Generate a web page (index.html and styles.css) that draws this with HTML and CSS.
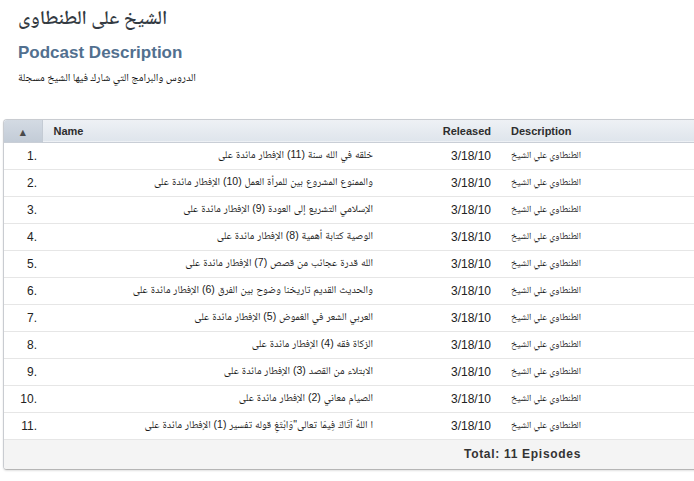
FILE: index.html
```html
<!DOCTYPE html>
<html>
<head>
<meta charset="utf-8">
<link rel="stylesheet" href="styles.css">
</head>
<body>
<div class="page">
  <h1 class="title" dir="rtl">الشيخ على الطنطاوى</h1>
  <h2 class="section">Podcast Description</h2>
  <p class="desc" dir="rtl">الدروس والبرامج التي شارك فيها الشيخ مسجلة</p>
</div>
<div class="tracklist">
  <table class="tracks">
    <colgroup>
      <col class="c-sort"><col class="c-name"><col class="c-rel"><col class="c-desc">
    </colgroup>
    <thead>
      <tr>
        <th class="sort"><span class="arrow">▲</span></th>
        <th class="name">Name</th>
        <th class="rel">Released</th>
        <th class="dsc">Description</th>
      </tr>
    </thead>
    <tbody>
      <tr><td class="num">1.</td><td class="name" dir="rtl">خلقه في الله سنة (11) الإفطار مائدة على</td><td class="rel">3/18/10</td><td class="dsc"><span dir="rtl">الطنطاوي علي الشيخ</span></td></tr>
      <tr><td class="num">2.</td><td class="name" dir="rtl">والممنوع المشروع بين للمرأة العمل (10) الإفطار مائدة على</td><td class="rel">3/18/10</td><td class="dsc"><span dir="rtl">الطنطاوي علي الشيخ</span></td></tr>
      <tr><td class="num">3.</td><td class="name" dir="rtl">الإسلامي التشريع إلى العودة (9) الإفطار مائدة على</td><td class="rel">3/18/10</td><td class="dsc"><span dir="rtl">الطنطاوي علي الشيخ</span></td></tr>
      <tr><td class="num">4.</td><td class="name" dir="rtl">الوصية كتابة أهمية (8) الإفطار مائدة على</td><td class="rel">3/18/10</td><td class="dsc"><span dir="rtl">الطنطاوي علي الشيخ</span></td></tr>
      <tr><td class="num">5.</td><td class="name" dir="rtl">الله قدرة عجائب من قصص (7) الإفطار مائدة على</td><td class="rel">3/18/10</td><td class="dsc"><span dir="rtl">الطنطاوي علي الشيخ</span></td></tr>
      <tr><td class="num">6.</td><td class="name" dir="rtl">والحديث القديم تاريخنا وضوح بين الفرق (6) الإفطار مائدة على</td><td class="rel">3/18/10</td><td class="dsc"><span dir="rtl">الطنطاوي علي الشيخ</span></td></tr>
      <tr><td class="num">7.</td><td class="name" dir="rtl">العربي الشعر في الغموض (5) الإفطار مائدة على</td><td class="rel">3/18/10</td><td class="dsc"><span dir="rtl">الطنطاوي علي الشيخ</span></td></tr>
      <tr><td class="num">8.</td><td class="name" dir="rtl">الزكاة فقه (4) الإفطار مائدة على</td><td class="rel">3/18/10</td><td class="dsc"><span dir="rtl">الطنطاوي علي الشيخ</span></td></tr>
      <tr><td class="num">9.</td><td class="name" dir="rtl">الابتلاء من القصد (3) الإفطار مائدة على</td><td class="rel">3/18/10</td><td class="dsc"><span dir="rtl">الطنطاوي علي الشيخ</span></td></tr>
      <tr><td class="num">10.</td><td class="name" dir="rtl">الصيام معاني (2) الإفطار مائدة على</td><td class="rel">3/18/10</td><td class="dsc"><span dir="rtl">الطنطاوي علي الشيخ</span></td></tr>
      <tr><td class="num">11.</td><td class="name" dir="rtl">ا اللهُ آتَاكَ فِيمَا تعالى"وَابْتَغِ قوله تفسير (1) الإفطار مائدة على</td><td class="rel">3/18/10</td><td class="dsc"><span dir="rtl">الطنطاوي علي الشيخ</span></td></tr>
    </tbody>
  </table>
  <div class="total">Total: 11 Episodes</div>
</div>
</body>
</html>
```

FILE: styles.css
```css
html, body {
  margin: 0;
  padding: 0;
  background: #ffffff;
  overflow: hidden;
}
body {
  font-family: "Liberation Sans", Arial, sans-serif;
  color: #222;
  width: 694px;
  height: 481px;
}
.page {
  padding: 6px 0 0 18px;
}
.title {
  margin: 0;
  font-family: "Noto Naskh Arabic", "DejaVu Sans", "Liberation Serif", serif;
  font-weight: 600;
  font-size: 19.5px;
  line-height: 28px;
  color: #333a42;
  width: max-content;
}
.section {
  margin: 8px 0 0 0;
  font-size: 17px;
  line-height: 22px;
  font-weight: bold;
  color: #52708f;
}
.desc {
  margin: 7px 0 0 0;
  font-family: "Noto Naskh Arabic", "DejaVu Sans", sans-serif;
  font-size: 10.8px;
  line-height: 16px;
  color: #111;
  width: max-content;
}
.tracklist {
  margin: 32px 0 0 3px;
  width: 760px;
  border: 1px solid #c9ccd1;
  border-right: none;
  border-bottom: 1px solid #b5b5b5;
  border-radius: 4px 0 0 4px;
  box-shadow: 0 1px 2px rgba(0,0,0,0.12);
  overflow: hidden;
}
.tracks {
  width: 100%;
  border-collapse: collapse;
  table-layout: fixed;
}
.c-sort { width: 38px; }
.c-name { width: 393px; }
.c-rel { width: 66px; }
.c-desc { width: auto; }
.tracks thead tr {
  height: 22px;
  background: linear-gradient(#eef1f5, #dfe5ec);
  border-bottom: 1px solid #c9ced6;
}
.tracks th {
  font-size: 11px;
  font-weight: bold;
  color: #2d2d2d;
  padding: 0;
  text-align: left;
}
.tracks th.sort {
  background: linear-gradient(#d3dae3, #c3ccd7);
  text-align: center;
  border-right: 1px solid #c4cbd4;
}
.arrow {
  font-family: "DejaVu Sans", sans-serif;
  font-size: 8px;
  color: #4a4a4a;
}
.tracks th.name { padding-left: 11px; }
.tracks th.rel { text-align: right; padding-right: 10px; }
.tracks th.dsc { padding-left: 10px; }
.tracks tbody tr {
  height: 27px;
  border-bottom: 1px solid #e6e6e6;
}
.tracks td {
  padding: 0;
  font-size: 12px;
  color: #222;
  white-space: nowrap;
  overflow: hidden;
}
.tracks td.num {
  text-align: right;
  padding-right: 5px;
}
.tracks td.name {
  font-family: "Liberation Sans", "Noto Naskh Arabic", "DejaVu Sans", sans-serif;
  font-size: 10.5px;
  color: #1a1a1a;
  text-align: right;
  padding-right: 62px;
}
.tracks td.rel {
  text-align: right;
  padding-right: 10px;
}
.tracks td.dsc {
  font-family: "Noto Naskh Arabic", "DejaVu Sans", sans-serif;
  font-size: 9.5px;
  color: #1a1a1a;
  padding-left: 10px;
}
.total {
  height: 29px;
  line-height: 29px;
  background: #f4f4f4;
  font-size: 12px;
  font-weight: bold;
  letter-spacing: 0.7px;
  color: #333;
  padding-left: 460px;
}
```
